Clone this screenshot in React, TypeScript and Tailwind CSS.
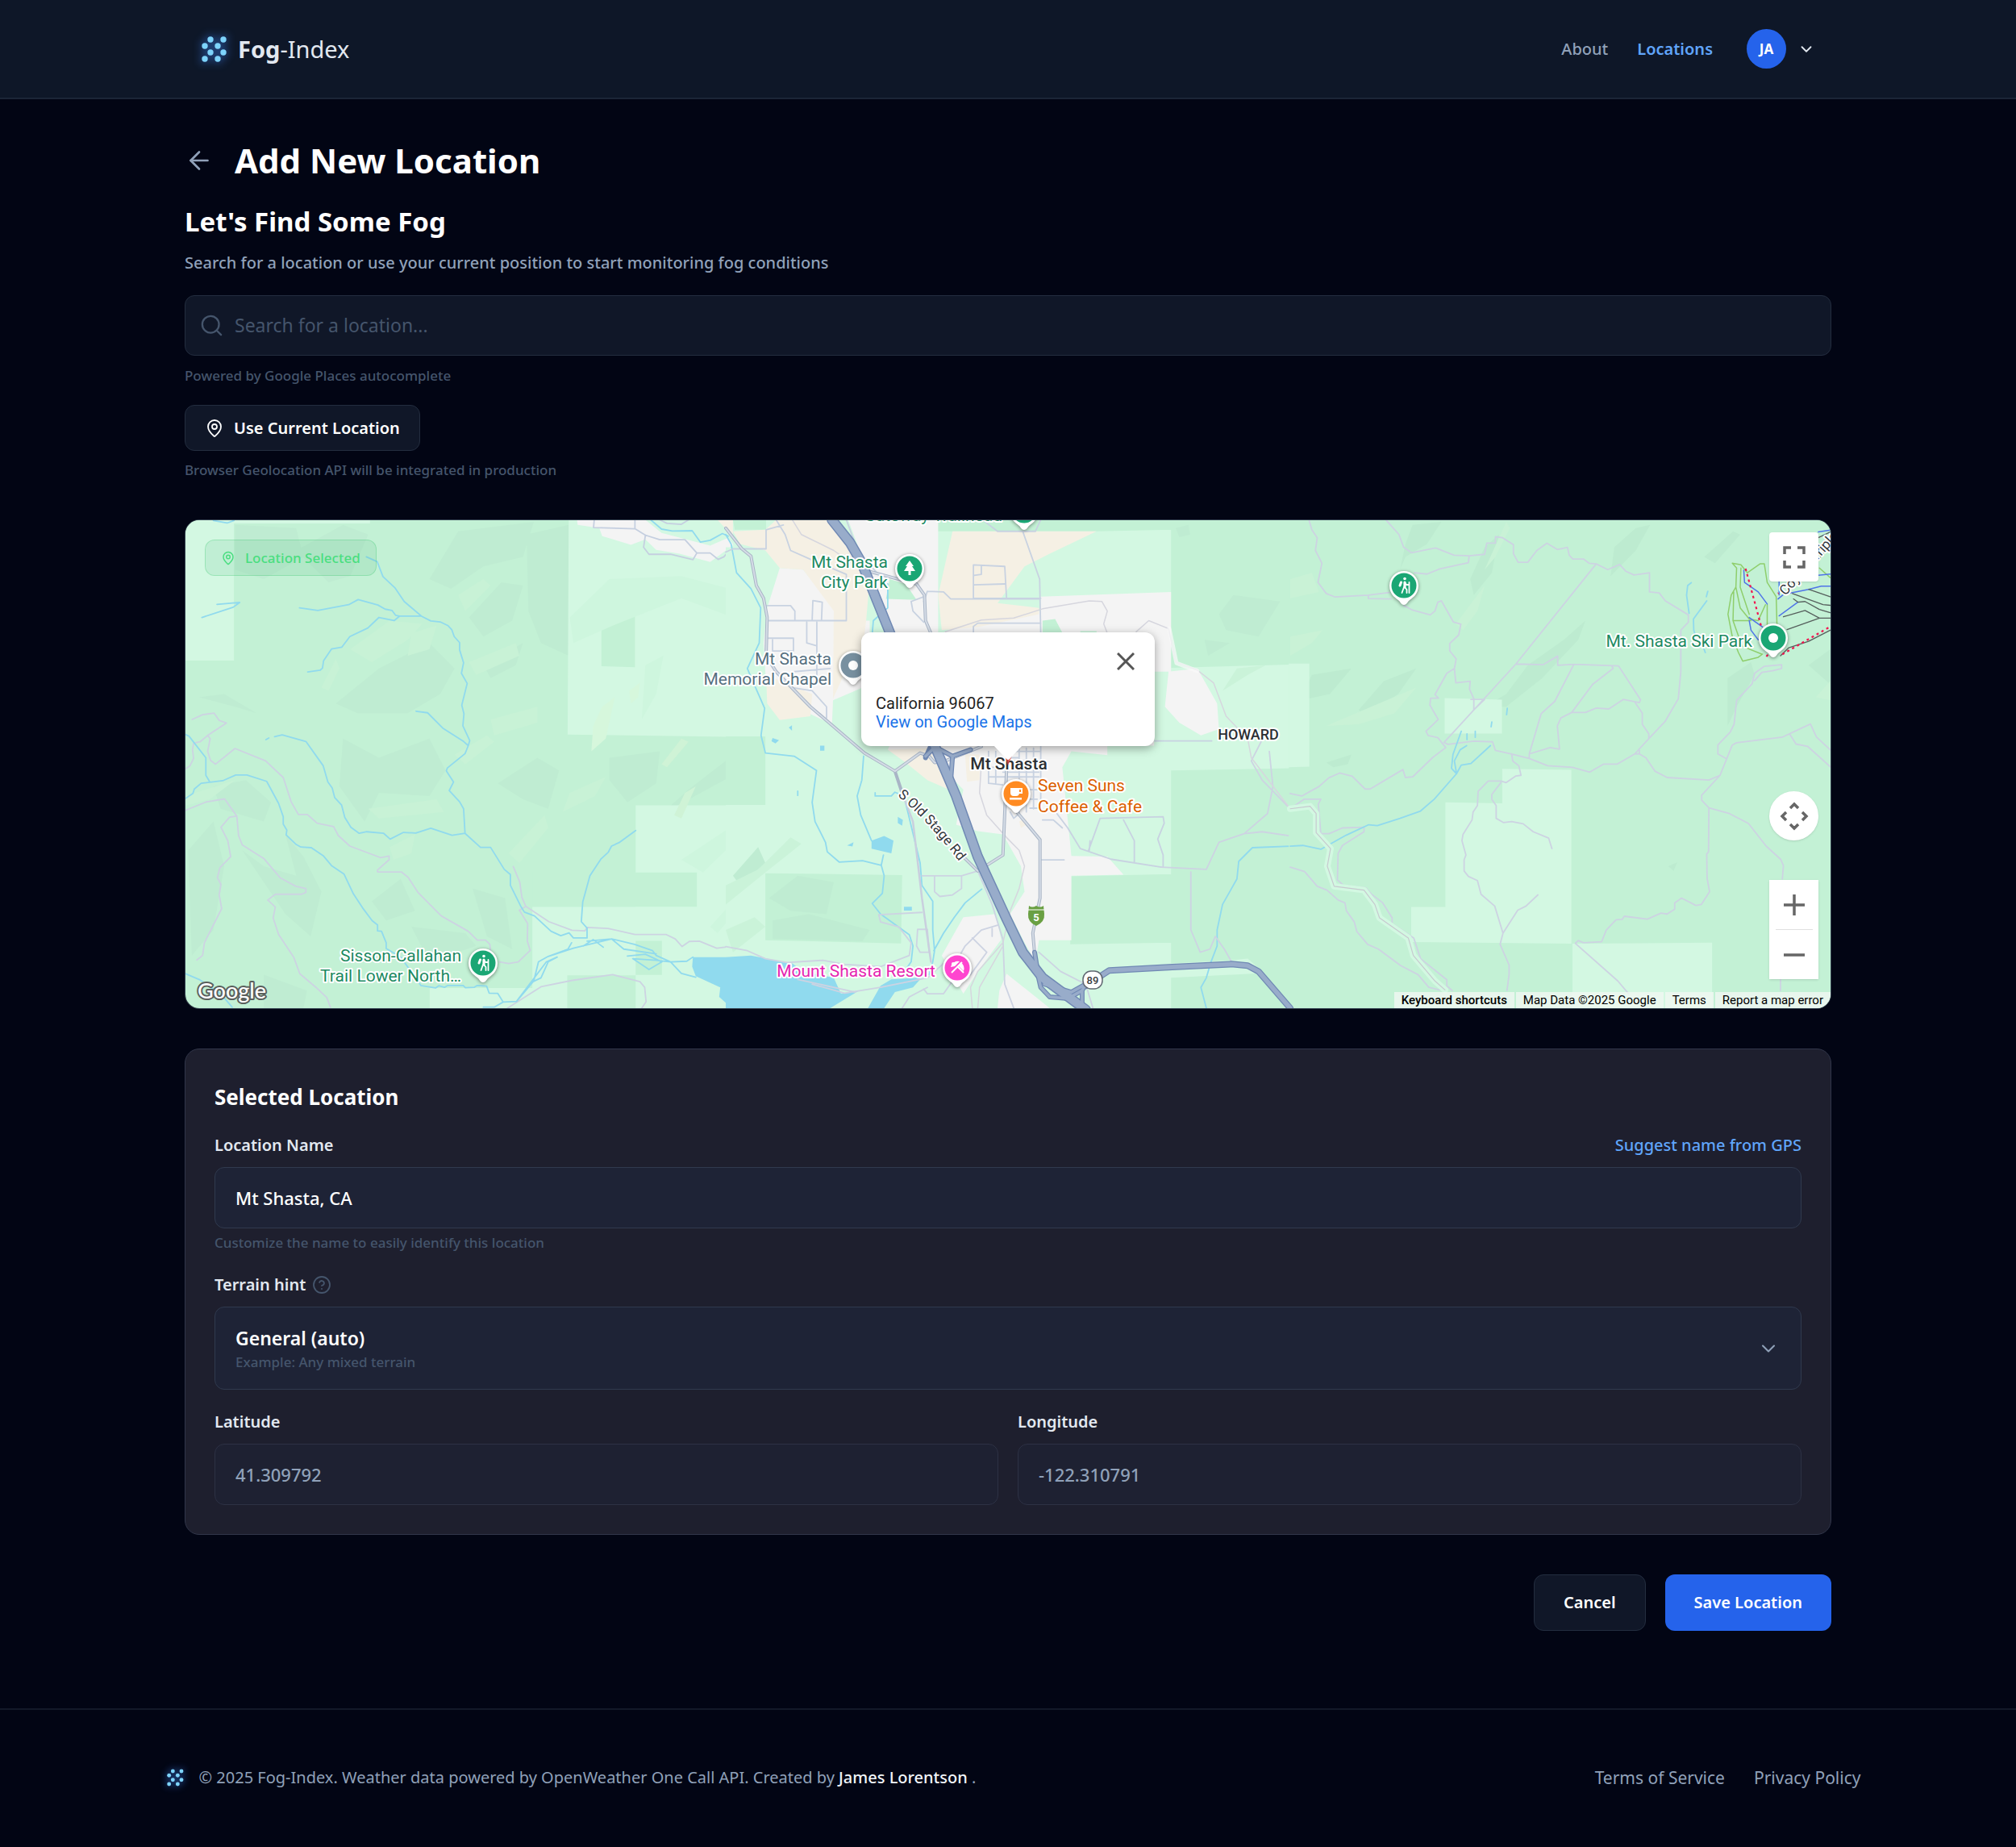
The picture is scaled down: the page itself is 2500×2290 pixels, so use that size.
import { useState } from 'react';
import type { ReactNode } from 'react';
import { ArrowLeft, ChevronDown, CircleHelp, MapPin, Search } from 'lucide-react';

const LogoDots = ({ className }: { className: string }) => (
  <svg viewBox="0 0 32 36" className={className} aria-hidden="true">
    {[
      [12, 6], [28, 6], [5, 14], [21, 14], [12, 22], [28, 22], [5, 30], [21, 30],
    ].map(([x, y]) => (
      <circle key={`${x}-${y}`} cx={x} cy={y} r="3.7" fill="#7dd3fc" />
    ))}
  </svg>
);

interface PinProps {
  x: number;
  y: number;
  color: string;
  children?: ReactNode;
}

const Pin = ({ x, y, color, children }: PinProps) => (
  <g transform={`translate(${x} ${y})`}>
    <path
      d="M0 24C-3 24-4 21-6 19-9 16-18 12-18 0A18 18 0 0 1 18 0C18 12 9 16 6 19 4 21 3 24 0 24Z"
      fill="#fff"
      style={{ filter: 'drop-shadow(0 1px 2px rgb(0 0 0 / .45))' }}
    />
    <circle r="15.5" fill={color} />
    {children}
  </g>
);

const Hiker = () => (
  <g stroke="#fff" strokeWidth="1.8" fill="none" strokeLinecap="round" strokeLinejoin="round">
    <circle cx="1" cy="-8.500" r="1.8" fill="#fff" stroke="none" />
    <path d="M1-4V2" strokeWidth="3.200" />
    <path d="M0 2L-2.500 9M1 2L3.500 5V9M1-4L3-1H6.500M6.500-4V9" />
    <path d="M-3.500-4L-5 0" strokeWidth="3" />
  </g>
);

// Each tile is drawn on its own 1568 x 1568 grid and scaled down to the map.
const TILE_SCALE = 'scale(.4464 .3954)';

const Tile = ({ x, children }: { x: number; children: ReactNode }) => (
  <g
    transform={`translate(${x} -6) ${TILE_SCALE}`}
    fill="none"
    strokeLinejoin="round"
    strokeLinecap="round"
    className="[&_path]:[vector-effect:non-scaling-stroke]"
  >
    {children}
  </g>
);

const LIGHT = '#d3f8e2';
const PARK = '#c3f1d5';
const TOWN = '#f4f4f4';
const SAND = '#f5f0e4';
const WATER = '#90daee';
const ROAD = '#cdd3e2';

const WestTile = () => (
  <Tile x={-9}>
    <path fill="#bfecd2" d="M160 30L330 40 350 130 240 200 160 170ZM330 110L460 30 530 60 480 190 420 210ZM440 590L560 480 700 400 770 480 730 560 640 620 500 620ZM460 700L560 760 700 700 745 800 700 880 560 870 520 960 450 850ZM780 50L990 20 960 130 850 160 760 230 700 200ZM970 60L1087 30V440L1010 400 975 300ZM810 320L900 210 960 220 930 330 850 380ZM850 470L960 400 940 470 870 510ZM100 850L190 830 260 900 240 960 120 920ZM30 1050L100 960 130 1100 100 1300 40 1380ZM180 1050L240 1100 330 1130 300 1000 350 1070 400 1180 370 1320 300 1250ZM540 1210L620 1140 660 1240 580 1270ZM650 1290L800 1310 830 1350 700 1400ZM820 1170L910 1200 930 1360 860 1320ZM1200 760L1340 740 1330 840 1250 900 1200 830ZM890 840L1000 760 1060 800 1030 920 960 890ZM1010 1130L1200 1125 1180 1200 1020 1220ZM60 570L160 600 220 620 130 560ZM1340 940L1568 800V730L1420 860ZM240 1440L360 1490 350 1545H240Z" />
    <path fill="#c8f2d6" d="M480 420L590 330 680 340 640 390 540 460 510 440ZM650 370L720 345 700 420 640 440ZM810 460L940 400 950 440 830 500ZM770 750L860 690 880 710 800 780ZM870 640L1000 600 1000 650 880 690ZM590 1040L660 1000 650 1060 600 1080ZM920 1060L1020 940 1030 980 950 1090ZM400 540L440 450 450 480 420 550ZM1090 870L1190 820 1160 880 1070 930ZM22 880L160 830 90 890 22 910ZM780 250L850 200 870 220 800 300ZM530 920L720 890 740 930 560 950Z" />
    <path fill={LIGHT} d="M22 14H535V25H157V455H22ZM1087 14H1568V695L1084 687ZM1273 909H1568V1568H701V1482H986V1227H1273Z" />
    <path fill={PARK} d="M1178 258L1271 260V476L1178 473ZM986 1120H1443V1227H986ZM1273 1334H1346V1441H1273ZM1083 1442H1273V1568H1083Z" />
    <path fill="#cef6de" d="M1090 320L1200 200 1400 190 1568 240V330L1400 260 1200 350 1100 400ZM1300 470L1350 440 1330 560 1290 640ZM1400 1080L1560 960V1010L1460 1120ZM1480 1290L1568 1180V1220L1500 1310Z" />
    <path fill="#d6f7dc" d="M1180 600L1215 570 1190 700 1150 740 1155 660ZM1255 550L1285 525 1280 570 1260 590Z" />
    <path fill="#cff3d6" d="M1380 940L1410 870 1440 850 1400 950ZM1345 780L1400 700 1420 710 1360 790Z" />
    <path fill={TOWN} d="M1110 14H1300L1345 55 1480 95 1530 70 1545 92 1480 146 1395 120 1330 108 1300 75 1260 92 1180 65 1172 40 1112 30Z" />
    <path fill={SAND} d="M1500 14H1568V90L1530 50Z" />
    <path fill={WATER} d="M1432 1385H1568V1545H1540L1505 1510 1508 1480 1440 1445 1430 1415Z" />
    <path
      stroke={ROAD}
      strokeWidth="1.8"
      d="M41 640L70 625 102 620 116 643 136 651 84 690 91 700 84 740 92 768 106 780 160 731 245 770 294 822 316 898 336 938H361L388 965 434 976 447 1004 479 1037 564 1073 588 1068V1080L556 1112V1118H622L641 1135 668 1182 733 1256 808 1304 833 1332H856L868 1345 870 1370M84 690L63 710 45 714 42 735 45 762 35 785 22 795M22 925L79 899 131 889 165 943 170 1004 180 1033 241 1077 286 1137 329 1163 357 1170V1182L345 1188H272L251 1206 272 1228 266 1262 281 1314 323 1385 340 1437 385 1480 415 1512 425 1542M165 943L145 946 121 978 140 1020 148 1070 118 1105 111 1136 121 1157 116 1190 123 1233 75 1340 70 1380 54 1394M933 1101L951 1150 957 1198 968 1226 1032 1274 1096 1301 1132 1303 1138 1292 1196 1295 1271 1314H1357L1383 1328 1402 1352 1422 1336 1450 1335 1498 1357 1530 1353M968 1226L950 1238 973 1280 972 1335 980 1364 947 1400 920 1405 895 1400M917 1545L1010 1478 1097 1458 1209 1440 1285 1462 1298 1480 1302 1525 1290 1545"
    />
    <path stroke="#c5cfe0" strokeWidth="1.8" d="M1158 14L1156 38 1271 42V14M1271 42L1300 62 1340 76H1410L1443 118H1480L1502 138 1518 130 1535 108M1300 62L1295 100 1310 122H1370L1432 139 1443 118M1340 14L1360 25 1400 28 1420 14" />
    <path
      stroke={WATER}
      strokeWidth="1.8"
      d="M525 130L555 145 571 192 605 228 630 270 678 316 704 331 730 334 752 346 762 358 769 380 784 399V422L795 462 789 495 805 527 790 595 796 622 793 660 812 706 808 722 799 747 750 792 747 801 767 836 755 863 784 898 795 920 799 997 842 1041H870L908 1110 925 1126V1160L955 1228 964 1244 992 1256 1038 1304 1065 1318 1088 1309 1100 1325H1138V1294L1122 1274 1126 1212 1146 1130 1177 1077 1197 1056 1206 1037 1227 1026 1273 988M339 290L390 298 476 280 502 264 557 281 577 294 596 298 606 313 617 316H678M617 316L602 330 560 320 529 353 479 380 457 413 428 419 406 456 403 479 397 485 362 491M663 614L695 619 737 667 795 709 808 722M270 694L291 688 357 709 405 785 418 836 430 855 437 885 456 908 465 947 482 978 505 997 526 992 573 997 591 1015 628 994 662 996 704 981 763 1003 799 997M22 687L32 692 79 760V815L89 834M22 888L43 872 47 858 66 840 126 832 162 814H193L248 834 281 903 294 945V968L304 987 302 1002 330 1032 343 1040 372 1042 405 1067 428 1098 463 1125 489 1187 514 1230 541 1271 556 1284V1303L567 1304 580 1340V1358L620 1385 662 1450 676 1474 717 1482 726 1475 742 1480 751 1474H794L800 1481 824 1480 833 1474 859 1476 866 1498 890 1499 905 1526 942 1524 990 1460 1003 1400 1030 1383 1100 1357 1206 1328 1270 1345 1320 1365 1330 1380 1370 1400 1415 1398 1432 1385M110 279L173 273 155 288 68 320M246 703L254 698M905 1526L880 1542H850M22 1437L60 1455 120 1500 152 1542M100 16L138 24 157 16M942 1524L1025 1400 1055 1385 1030 1400 1010 1450 988 1462M1030 1383L1085 1360 1095 1340M1138 1335L1206 1328 1240 1360 1330 1375M1250 1382L1300 1376 1346 1400 1310 1424 1265 1390 1330 1395 1370 1400 1400 1436 1440 1448M1128 1350L1155 1330 1183 1354M1315 14L1345 43 1375 49 1430 48 1453 84 1480 78 1514 57 1530 65"
    />
  </Tile>
);

const CenterTile = () => (
  <Tile x={671}>
    <path fill={LIGHT} d="M20 14H1568V1545H20Z" />
    <path fill={LIGHT} d="M0 100H40V693H0ZM0 908H40V1400H0Z" />
    <path fill={PARK} d="M0 693H110V908H0ZM110 1122L490 1128 487 1342 110 1332ZM490 14H1237V45L1030 50H490ZM1237 14H1568V468L1237 478ZM1237 800L1568 793V1545H1440L1500 1440 1450 1390 1405 1395 1237 1405ZM960 1132L1237 1125V1340L957 1345ZM1237 1450L1480 1436 1568 1560V1568H1237ZM20 14H112V45H25Z" />
    <path fill="#bfecd2" d="M1370 310L1410 250 1540 270 1480 380 1390 360ZM1330 390L1400 400 1340 440ZM1250 40L1285 30 1290 60 1260 68ZM120 1200L200 1130 300 1150 280 1250 180 1240ZM130 1270L230 1250 400 1300 380 1335 130 1328ZM20 1130L90 1040 110 1090 40 1160Z" />
    <path fill="#caf3d9" d="M0 1160L90 1110 180 1010 210 1030 110 1120 0 1220ZM0 1300L80 1260 110 1290 20 1370ZM1420 480L1500 470 1450 500 1380 550Z" />
    <path fill={TOWN} d="M150 165L215 170 300 290 335 210V330H400V470L380 540 298 580 295 655 230 620 112 530 105 400 115 290ZM340 14H590V370H450L395 180ZM600 370L680 325 875 300V255L1237 240V490H1190V722H1060V752L960 740 935 790 955 1010 960 1068 1060 1070 1105 1127 960 1130V1332H870L860 1400 830 1340 790 1250 830 1180 820 1100 770 1000 700 990 640 970 660 860 600 790 450 735ZM1230 490L1310 480 1365 590 1370 670 1320 690 1260 650 1220 600ZM660 1260L750 1250 765 1330 700 1430 660 1500 600 1380ZM780 1437L900 1545H755L760 1490Z" />
    <path fill={SAND} d="M20 50L110 45 140 14H285L400 200 390 330 380 420 340 470 298 575 300 300 215 170 150 165 110 110 40 90ZM590 250L630 50H1030L900 120 830 160 755 275 870 290V310L700 350 600 360ZM112 500L240 560 235 630 150 642 115 590ZM450 735L565 730 620 860 560 830 500 775ZM665 750H705V830L670 835ZM815 960L835 950V970L820 980Z" />
    <path fill={PARK} d="M455 200L500 215 530 265 445 262ZM880 330L915 325 935 368H880ZM985 363H1030V370H985Z" />
    <path fill={WATER} d="M0 1385L70 1380 185 1405 215 1430 300 1450 320 1500 370 1490 290 1545H0ZM430 1475L460 1455 530 1450 560 1430 520 1480 470 1495 440 1545H395ZM405 1020L440 1005 466 1020 460 1060 405 1045ZM495 1227H517V1239H495ZM130 698L148 705 138 715 127 708ZM262 722H274V738H262ZM478 945L492 955 490 973 478 965ZM337 1035L355 1025 352 1038ZM175 665L184 658V675Z" />
    <path
      stroke={WATER}
      strokeWidth="1.8"
      d="M0 60L15 90 30 180 70 230 97 290 93 400 60 480 75 520 108 605 98 690 110 745 190 755 252 800 240 900 248 960 277 1025 282 1055 315 1087 380 1083 432 1097 438 1065M432 1097L440 1130 435 1185 407 1217 430 1250 510 1315 520 1350 515 1400 490 1440M383 755L378 830 365 880 375 940 405 1020M415 870V880H460L470 868 495 880 510 950 540 1090 545 1160 575 1210V1300L580 1365 575 1400 565 1440M711 1172L665 1215 635 1260 605 1310 578 1365M450 215V290L410 330 407 370M1568 1037L1463 1042 1425 1085 1420 1140 1380 1220 1365 1300V1350L1348 1400 1335 1450 1320 1480 1335 1545M200 865V878"
    />
    <path
      stroke="#c8d2e1"
      strokeWidth="1.8"
      d="M0 115L20 105H112V45L160 30M140 14L165 60 180 110 240 140 335 185V330H118M113 283H180L192 300V328M240 328L242 267 268 272 266 328M253 335V520M225 335V400L250 408M115 385H188V425H130V390M190 490L290 480M185 540L240 550 280 600V635M825 50L872 200 875 370M688 155L775 160 780 260 M688 155V260H875M688 218L775 215M710 158V185L690 188M625 262H870M560 238L605 240 625 262M560 238L550 270M515 270L550 255M515 270L520 300 550 335M688 370V348L700 338H875M728 790H770M730 740V840L770 845M770 740H875M750 740V840M815 730V930M835 730V930M855 730V920M875 725V900M770 770H870M770 805H870M730 820H870M800 860H870M800 890H865M845 918H865M790 930L800 950 815 935M880 955H910L935 980M873 1080H940M780 730V760H815V730M920 935L950 980 985 1045 1070 1078 1210 1103M1192 707H1350M1008 1050L1040 950 1215 945 1218 965 1200 1015 1215 1065V1103M1105 955L1135 1020V1088M1010 1050L1012 1020M335 14L360 90 380 130 420 180M720 20L755 50H860L875 14"
    />
    <path
      stroke={ROAD}
      strokeWidth="1.8"
      d="M1210 1103L1335 1110 1370 1025 1440 998 1490 992 1568 1005M1292 1118V1300L1318 1370 1345 1360 1360 1320 1385 1360 1405 1400M1487 710L1460 770 1490 830 1568 920M1510 740L1520 850 1505 935 1440 998M545 1130L655 1130 700 1115M580 1130V1180L595 1195 630 1190 655 1170V1130M545 1245L425 1252 430 1275 480 1290 515 1340 510 1380 430 1415 330 1408 270 1395 170 1402 110 1390 60 1365 0 1352M533 1298H560L565 1370H540L530 1350ZM640 1400L665 1350 710 1300 755 1285M685 1325L725 1370 680 1440 630 1460 605 1500H560L550 1485M560 1480L510 1510 490 1545M700 1115L740 1220 770 1330 775 1470 800 1545M740 1295V1320M870 1370L930 1430 1000 1470 1020 1545M240 1470L330 1498 430 1480 560 1450 610 1400M360 1495L200 1455"
    />
    <path stroke="#d6d6de" strokeWidth="1.5" d="M710 780L705 870 725 940 780 1010 815 1050 830 1100 815 1170 790 1240 770 1340 700 1430 680 1480 685 1545M700 1545L705 1480 770 1350M610 365L710 328 800 322 880 293 1010 268 1045 270 1060 300 1050 340 1060 370M1140 365L1175 330 1230 355 1250 460 1310 485 1355 525 1390 630 1450 700 1460 760 1568 920M185 14L210 60 300 110 350 150" />
    <path stroke="#fafafa" strokeWidth="5" d="M1232 355L1252 463 1310 488" opacity=".7" />
    <g stroke="#a9b5c6" strokeWidth="4">
      <path d="M0 40L45 105 70 128 85 220 105 260 115 320 112 440 140 490 235 600 385 745 470 802 540 745 565 755 580 775 610 770 710 725M470 802L490 870M655 1065L700 1115 770 1065 780 800M805 925L873 1017V1200L853 1310 860 1400M380 170L480 200 530 215 552 250 555 330 570 370" />
    </g>
    <path stroke="#d5dce6" strokeWidth="2" d="M0 40L45 105 70 128 85 220 105 260 115 320 112 440 140 490 235 600 385 745 470 802 540 745 565 755 580 775 610 770 710 725M655 1065L700 1115 770 1065 780 800M805 925L873 1017V1200L853 1310 860 1400M380 170L480 200 530 215 552 250 555 330 570 370" />
    <path stroke="#c9cfde" strokeWidth="2.500" d="M490 870L520 960 545 1200 570 1400" />
    <g stroke="#7089b4" strokeWidth="6">
      <path d="M555 755L585 722M575 722L630 755 625 830M570 722L555 760M630 755L680 735M858 1370L865 1420 885 1460 1000 1545M865 1430L875 1480 900 1510 950 1515 990 1490 1000 1470M885 1470L960 1495 1000 1470M990 1490V1545" />
      <path strokeWidth="8" d="M1568 1545L1480 1430 1450 1412 1405 1407 1240 1416 1065 1427 1000 1475" />
      <path strokeWidth="13" d="M295 14L345 85 378 150 455 365 585 735 640 880 700 1070 780 1265 825 1370 880 1450 1000 1550" />
    </g>
    <g stroke="#98acca" strokeWidth="3.500">
      <path d="M555 755L585 722M575 722L630 755 625 830M630 755L680 735M858 1370L865 1420 885 1460 1000 1545M865 1430L875 1480 900 1510 950 1515 990 1490 1000 1470M885 1470L960 1495 1000 1470M990 1490V1545" />
      <path strokeWidth="5.500" d="M1568 1545L1480 1430 1450 1412 1405 1407 1240 1416 1065 1427 1000 1475" />
      <path strokeWidth="10" d="M295 14L345 85 378 150 455 365 585 735 640 880 700 1070 780 1265 825 1370 880 1450 1000 1550" />
    </g>
  </Tile>
);

const EastTile = () => (
  <Tile x={1371}>
    <path fill={PARK} d="M-4 14H1568V1568H20L-4 1500Z" />
    <path fill="#bdebd0" d="M340 30L420 20 380 90 320 130 305 170 320 90ZM540 100L580 60 560 180 510 250 500 200ZM900 100L960 40 1000 30 960 110 890 190ZM30 580L60 500 170 480 110 560ZM190 610L260 520 350 480 300 560 210 630ZM600 560L660 470 760 390 820 330 800 390 700 510 600 600 540 600ZM1215 510L1280 460 1290 500 1240 600 1215 660ZM1440 470L1500 420V530ZM100 775L170 750 160 780 120 790ZM1050 1100L1075 1088 1065 1115ZM1150 130L1230 50 1250 60 1180 150Z" />
    <path fill="#c9f2d6" d="M100 660L350 540 290 620 190 655ZM460 340L540 220 520 300 480 360ZM0 380L90 360 60 400 0 440ZM0 200L60 180 80 240 0 260ZM540 170L600 20 610 40 570 130ZM1460 570L1500 520V580Z" />
    <path fill={LIGHT} d="M-4 465H53V788L-4 790ZM429 573L588 578V684H429ZM589 795L781 798V1343L336 1338V1228H431V900L589 903ZM784 1343L1172 1340V1545H784Z" />
    <path
      stroke={ROAD}
      strokeWidth="1.8"
      d="M52 14L60 45 75 70 70 110 88 150 77 210 100 245 125 256 217 250 275 242M217 250V261L280 262M266 14L302 60 315 100 337 117 404 102 455 125 497 127 540 122 546 87H570V67L590 70 620 92V120L633 147H660L685 110 713 87 742 107 770 100 775 125 785 137H815L830 150 850 152 882 170 915 154 932 175 955 187 998 180V240L1025 243 1042 268 1106 312V335L1085 360V490L1078 575 1042 645 996 700 957 748 908 780H870L832 805 784 790 715 785 664 762 615 748 570 737 562 710 510 708 438 718 427 712M497 127L495 148 415 168 380 184 345 180M316 283L340 297 389 312 402 300 410 272 420 268 453 334 474 341 468 375 443 402V425L461 450 456 480 460 525 500 520 498 545 510 575V610L540 577H502M456 480L435 495 402 562 412 573H390L388 595 411 640 377 677 383 690 410 697 432 728M850 152L627 466 427 712M627 466L703 468 743 441V470L788 467 912 472 973 578 970 587 925 577 885 607 850 604 820 618H782L752 635 742 660 748 733 722 728 664 748V762M788 467L735 583 697 622 664 748M782 618L840 530 897 480 893 472M958 587L978 620V655L996 685V700M970 737V748H957M970 748L988 760 1013 802 1047 822 1163 830 1194 815 1228 720 1240 713 1368 695 1445 654 1462 695 1500 735M1387 685L1405 717 1437 724 1500 788M1194 815L1143 877V893L1163 917 1220 935 1273 966 1322 1037 1362 1078 1370 1098 1367 1140M1163 917L1162 1055 1157 1062 1158 1138 1165 1180 1142 1220 1127 1223 1087 1200 1068 1215V1235L1047 1250 1030 1247 992 1266 928 1257 922 1267 905 1268 878 1300 865 1337 815 1340 800 1333 792 1342 910 1460 940 1500M1212 763L1188 748V720L1222 680 1233 655 1240 580 1283 528 1290 495 1317 473 1365 468V480L1340 487 1310 492 1290 518M432 728L395 760 340 820 320 822 313 797 222 858H208L172 818 137 808 107 823 80 850 32 880 0 872M0 920L38 890H85L78 905 85 998H108L145 980 205 978V992L145 1035 133 1060 131 1143 148 1160 210 1168 225 1187 257 1215 283 1262V1280L343 1325 362 1390 435 1456V1475L450 1490M0 1103L40 1117 75 1163 102 1175 133 1206 152 1215 156 1240 178 1275 185 1305 215 1345 245 1360 307 1412 355 1440 385 1480 415 1488M615 748L618 770 635 785 641 815 627 817 600 838 585 833H550L522 865 520 910 508 930 505 955 480 1000 477 1020 488 1065 483 1080V1115L495 1132 520 1145 530 1188 568 1225 591 1310 583 1345 608 1410V1440L602 1490M585 838L560 875V890L572 910V950L592 963 615 960 647 967 675 992 718 1012 727 1045M591 1310L632 1238 655 1225 688 1190M1362 1453V1490"
    />
    <path stroke={WATER} strokeWidth="1.8" d="M475 677L452 750 448 793 462 810 475 783 502 778 556 722M490 722L472 735 456 770 462 810 400 890 362 927 305 950 242 973 218 970 155 1003 85 1047 35 1035 0 1037M491 685V703M514 677V696M560 648L558 663M603 605L601 625M1114 211L1104 220 1101 250 1108 307M1160 238L1156 255M1157 268L1120 325 1121 360 1126 380M1145 405L1153 430" />
    <path stroke="#d3f8e2" strokeWidth="8" d="M0 920L55 912 72 935V995L112 1045 103 1100 122 1163 205 1175 235 1220 248 1262 328 1325 342 1380 402 1460 430 1488" />
    <path stroke="#c7c9cf" strokeWidth="1.2" d="M0 920L55 912 72 935V995L112 1045 103 1100 122 1163 205 1175 235 1220 248 1262 328 1325 342 1380 402 1460 430 1488" />
    {/* ski runs */}
    <path stroke="#8fce6c" strokeWidth="1.5" d="M1240 165L1228 150 1252 155 1270 180 1305 152H1317L1325 210 1350 255 1352 340M1240 165L1238 225 1225 250 1216 310 1228 380 1245 430 1257 457 1300 445 1312 435M1238 225L1250 290 1275 325 1300 330 1320 280M1252 165L1250 225 1275 310M1232 240L1230 330 1280 330M1230 330L1255 410 1310 435M1325 280V345M1470 165L1500 195" />
    <path stroke="#4f74e8" strokeWidth="1.5" d="M1260 172L1262 210 1300 240 1325 278M1275 320L1312 350M1275 330L1280 360 1300 390M1355 262L1370 248 1440 232 1475 222H1500M1358 315L1410 272M1467 52L1500 46M1467 188L1500 184M1358 205V250" />
    <path stroke="#555e5c" strokeWidth="1.3" d="M1395 245L1480 280 1500 282M1440 232L1500 255M1398 262L1410 272 1430 270 1470 295 1500 305M1370 318L1430 298 1470 322H1500M1470 322L1380 358M1362 440L1385 415 1440 395 1500 360M1467 140L1500 90M1467 70L1500 52" />
    <path stroke="#f1154f" strokeWidth="2.200" strokeDasharray="3 4" strokeLinecap="butt" d="M1265 167L1310 355M1495 352L1360 440M1327 437L1317 450M1380 220L1355 245" />
  </Tile>
);

const MapCanvas = () => (
  <svg
    viewBox="0 0 2042 605"
    preserveAspectRatio="xMidYMid slice"
    className="absolute inset-0 h-full w-full bg-[#c3f1d5] font-[Roboto,sans-serif]"
    role="img"
    aria-label="Map of Mt Shasta, California"
  >
    <WestTile />
    <CenterTile />
    <EastTile />

    <Pin x={1041} y={-12} color="#1aa674" />
    <Pin x={899} y={60} color="#1aa674">
      <path d="M0-10L5-3H3L7 3H1.500V8H-1.500V3H-7L-3-3H-5Z" fill="#fff" />
    </Pin>
    <Pin x={829} y={180} color="#7890a0">
      <circle r="6" fill="#fff" />
    </Pin>
    <Pin x={1031} y={339} color="#ff8b22">
      <path d="M-7-7H4V-1A4 4 0 0 1 0 3H-3A4 4 0 0 1-7-1ZM-8 5H7V7.500H-8Z" fill="#fff" />
      <path d="M4-6H7V-1H4" stroke="#fff" strokeWidth="2" fill="none" />
    </Pin>
    <Pin x={958} y={555} color="#ff45cf">
      <path d="M-8-1A9 9 0 0 1 3-8L-3-2ZM4-7A9 9 0 0 1 8 4L2-2Z" fill="#fff" />
      <path d="M6-7L-7 6M0-2L8 6" stroke="#fff" strokeWidth="2" />
      <circle cx="-5" cy="-5" r="2" fill="#fff" />
    </Pin>
    <Pin x={370} y={549} color="#1aa674"><Hiker /></Pin>
    <Pin x={1512} y={81} color="#1aa674"><Hiker /></Pin>
    <Pin x={1970} y={146} color="#1aa674">
      <circle r="6" fill="#fff" />
    </Pin>

    <g stroke="#fff" strokeWidth="4" strokeLinejoin="round" style={{ paintOrder: 'stroke' }} fontSize="21">
      <g textAnchor="end" fill="#1c8a62">
        <text x="1014" y="1">Gateway Trailhead</text>
        <text x="872" y="59">Mt Shasta</text>
        <text x="872" y="84">City Park</text>
        <text x="343" y="547">Sisson-Callahan</text>
        <text x="343" y="572">Trail Lower North…</text>
        <text x="1944" y="157">Mt. Shasta Ski Park</text>
      </g>
      <g textAnchor="end" fill="#56707f">
        <text x="802" y="179">Mt Shasta</text>
        <text x="802" y="204">Memorial Chapel</text>
      </g>
      <text x="931" y="566" textAnchor="end" fill="#e526b0">Mount Shasta Resort</text>
      <g fill="#db6000">
        <text x="1058" y="336">Seven Suns</text>
        <text x="1058" y="362">Coffee &amp; Cafe</text>
      </g>
      <g textAnchor="middle" fill="#2b2f33" fontWeight="500">
        <text x="1022" y="309">Mt Shasta</text>
        <text x="1319" y="272" fontSize="18">HOWARD</text>
      </g>
      <path d="M1017 292H1026L1021 304Z" fill="#d9443c" stroke="none" opacity=".8" />
      <path id="stage-rd" d="M884 342Q918 368 966 430" fill="none" stroke="none" />
      <text fill="#33373b" fontSize="17">
        <textPath href="#stage-rd">S Old Stage Rd</textPath>
      </text>
      <text transform="translate(1985 94) rotate(-48)" fill="#33373b" fontSize="17">Coyote Triple</text>
    </g>

    <path d="M1047 478Q1051 481 1056 478 1061 481 1065 478L1066 488Q1067 498 1056 503 1045 498 1046 488Z" fill="#6aa043" />
    <path d="M1046 483H1066" stroke="#fff" strokeWidth="1" />
    <text x="1056" y="497" fontSize="13" fontWeight="700" textAnchor="middle" fill="#fff">5</text>
    <rect x="1114" y="559" width="24" height="22" rx="10" fill="#fff" stroke="#5f6670" strokeWidth="1.500" />
    <text x="1126" y="575" fontSize="13" fontWeight="500" textAnchor="middle" fill="#3c4043">89</text>

    <text
      x="16" y="593" fontFamily="Lato, sans-serif" fontSize="27" fontWeight="500" fill="#fff"
      stroke="#5a5f5c" strokeWidth="4" strokeLinejoin="round" style={{ paintOrder: 'stroke' }}
    >
      Google
    </text>
  </svg>
);

const mapButton = 'flex items-center justify-center bg-white text-[#666]';

const LocationMap = () => (
  <section className="relative mt-[49px] h-[607px] overflow-hidden rounded-[18px] border border-[#33414f]">
    <MapCanvas />

    <div className="absolute left-6 top-6 flex h-[45px] items-center gap-3 rounded-xl border border-[#22c55e]/25 bg-[#22a055]/10 px-[19px] text-[17px] font-medium text-[#4ade80]">
      <MapPin className="size-[18px]" strokeWidth={2} />
      Location Selected
    </div>

    <div className="absolute left-1/2 top-[139px] h-[141px] w-[364px] -translate-x-1/2 rounded-xl bg-white px-[18px] pt-[77px] font-[Roboto,sans-serif] text-[20px] leading-[23px] text-[#222] shadow-[0_3px_12px_rgba(0,0,0,0.35)]">
      <p>California 96067</p>
      <a href="#maps" className="text-[#1a73e8]">View on Google Maps</a>
      <button type="button" aria-label="Close" className="absolute right-6 top-6 p-px">
        <svg viewBox="0 0 22 22" className="size-[22px]" stroke="#555" strokeWidth="3">
          <path d="M1 1L21 21M21 1L1 21" />
        </svg>
      </button>
      <svg viewBox="0 0 36 17" className="absolute left-1/2 top-full h-[17px] w-9 -translate-x-1/2" fill="#fff">
        <path d="M0-1H36L20 16Q18 18 16 16Z" />
      </svg>
    </div>

    <button type="button" aria-label="Toggle fullscreen view" className={`${mapButton} absolute right-[15px] top-[15px] size-[61px] rounded-sm shadow`}>
      <svg viewBox="0 0 28 28" className="size-7" fill="none" stroke="currentColor" strokeWidth="3.500">
        <path d="M2 10V2H10M18 2H26V10M26 18V26H18M10 26H2V18" />
      </svg>
    </button>
    <button type="button" aria-label="Map camera controls" className={`${mapButton} absolute bottom-[208px] right-[15px] size-[61px] rounded-full shadow`}>
      <svg viewBox="0 0 36 36" className="size-9" fill="none" stroke="currentColor" strokeWidth="3.500">
        <path d="M13 8L18 3 23 8M28 13L33 18 28 23M23 28L18 33 13 28M8 23L3 18 8 13" />
      </svg>
    </button>
    <div className="absolute bottom-9 right-[15px] flex w-[61px] flex-col items-center bg-white shadow">
      <button type="button" aria-label="Zoom in" className={`${mapButton} size-[61px]`}>
        <svg viewBox="0 0 26 26" className="size-[26px]" stroke="currentColor" strokeWidth="3.500">
          <path d="M13 0V26M0 13H26" />
        </svg>
      </button>
      <div className="h-px w-[46px] bg-[#e0e0e0]" />
      <button type="button" aria-label="Zoom out" className={`${mapButton} size-[61px]`}>
        <svg viewBox="0 0 26 26" className="size-[26px]" stroke="currentColor" strokeWidth="3.500">
          <path d="M0 13H26" />
        </svg>
      </button>
    </div>

    <div className="absolute bottom-0 right-0 flex gap-0.5 font-[Roboto,sans-serif] text-[15px] leading-5 text-black [&>*]:bg-[#f1f7f3]/80 [&>*]:px-[9px]">
      <button type="button" className="font-medium">Keyboard shortcuts</button>
      <span>Map Data ©2025 Google</span>
      <a href="#map-terms">Terms</a>
      <a href="#report">Report a map error</a>
    </div>
  </section>
);

const labelClass = 'block text-[20px] font-semibold leading-8 text-slate-200';
const hintClass = 'text-[17px] font-medium leading-6 text-slate-600';
const fieldClass = 'mt-[11px] block h-[76px] w-full rounded-xl border px-[25px] text-[22px] font-medium outline-none';
const readOnlyField = `${fieldClass} border-[#2d3144] bg-[#1e2132] text-slate-400`;

const LocationForm = () => {
  const [name, setName] = useState('Mt Shasta, CA');

  return (
    <section className="mt-[49px] rounded-[18px] border border-[#31364a] bg-[#1e1f2e] p-9">
      <h3 className="text-[26px] font-bold leading-[46px]">Selected Location</h3>

      <div className="mt-[21px] flex items-center justify-between">
        <label htmlFor="name" className={labelClass}>Location Name</label>
        <button type="button" className="text-[20px] font-medium leading-8 text-[#60a5fa]">Suggest name from GPS</button>
      </div>
      <input
        id="name"
        value={name}
        onChange={(e) => setName(e.target.value)}
        className={`${fieldClass} border-[#303a4e] bg-[#1e2336] text-white`}
      />
      <p className={`mt-1.5 ${hintClass}`}>Customize the name to easily identify this location</p>

      <div className="mt-6 flex items-center gap-2">
        <label htmlFor="terrain" className={labelClass}>Terrain hint</label>
        <CircleHelp className="size-6 text-slate-600" strokeWidth={1.8} />
      </div>
      <div className="relative mt-[11px] h-[103px] rounded-xl border border-[#303a4e] bg-[#1e2336] px-[25px] py-5">
        <select id="terrain" className="block w-full appearance-none bg-transparent text-[23px] font-semibold leading-9 text-white outline-none">
          <option>General (auto)</option>
        </select>
        <p className={hintClass}>Example: Any mixed terrain</p>
        <ChevronDown className="pointer-events-none absolute right-[26px] top-1/2 size-7 -translate-y-1/2 text-slate-400" strokeWidth={1.8} />
      </div>

      <div className="mt-6 grid grid-cols-2 gap-6">
        <div>
          <label htmlFor="lat" className={labelClass}>Latitude</label>
          <input id="lat" readOnly value="41.309792" className={readOnlyField} />
        </div>
        <div>
          <label htmlFor="lng" className={labelClass}>Longitude</label>
          <input id="lng" readOnly value="-122.310791" className={readOnlyField} />
        </div>
      </div>
    </section>
  );
};

const Header = () => (
  <header className="border-b-2 border-[#1b2537] bg-[#0e1728]">
    <div className="mx-auto flex h-[121px] max-w-[2042px] items-center justify-between pl-[18px] pr-5">
      <a href="#home" className="flex items-center gap-3 text-[29px] text-slate-200">
        <LogoDots className="h-9 w-9 drop-shadow-[0_0_6px_#3b82f6]" />
        <span><b className="font-bold">Fog</b>-Index</span>
      </a>
      <nav className="flex items-center text-[20px] font-medium">
        <a href="#about" className="text-slate-400">About</a>
        <a href="#locations" className="ml-9 font-semibold text-[#60a5fa]">Locations</a>
        <button type="button" aria-label="Account menu" className="ml-[42px] flex items-center gap-3.5">
          <span className="flex size-[49px] items-center justify-center rounded-full bg-[#2563eb] text-[17px] font-bold text-white">JA</span>
          <ChevronDown className="size-[22px] text-slate-200" />
        </button>
      </nav>
    </div>
  </header>
);

const Footer = () => (
  <footer className="mt-24 border-t-2 border-[#131929]">
    <div className="mx-auto flex max-w-[2115px] items-center justify-between py-[68px] text-[20px] leading-8 text-slate-400">
      <div className="flex items-center gap-[18px] pl-3">
        <LogoDots className="size-6 drop-shadow-[0_0_5px_#3b82f6]" />
        <p>
          © 2025 Fog-Index. Weather data powered by OpenWeather One Call API. Created by{' '}
          <a href="#author" className="font-medium text-slate-100">James Lorentson</a> .
        </p>
      </div>
      <div className="flex gap-9 text-[21px]">
        <a href="#terms">Terms of Service</a>
        <a href="#privacy">Privacy Policy</a>
      </div>
    </div>
  </footer>
);

export default function App() {
  return (
    <div className="min-h-screen bg-[#020514] font-['Noto_Sans',sans-serif] text-white">
      <Header />
      <main className="mx-auto max-w-[2042px] pt-12">
        <div className="flex items-center gap-[26px]">
          <button type="button" aria-label="Back" className="flex size-9 items-center justify-center">
            <ArrowLeft className="size-9 text-slate-400" strokeWidth={1.8} />
          </button>
          <h1 className="text-[42px] font-bold leading-[56px]">Add New Location</h1>
        </div>

        <h2 className="mt-7 text-[33px] font-bold leading-10">Let's Find Some Fog</h2>
        <p className="mt-[15px] text-[20px] font-medium leading-8 text-slate-400">
          Search for a location or use your current position to start monitoring fog conditions
        </p>

        <label className="mt-6 flex h-[75px] items-center gap-[13px] rounded-xl border border-[#232d3f] bg-[#101728] px-[17px]">
          <Search className="size-[31px] text-slate-600" strokeWidth={1.8} />
          <input
            type="text"
            aria-label="Search for a location"
            placeholder="Search for a location..."
            className="flex-1 bg-transparent text-[23px] outline-none placeholder:text-slate-600"
          />
        </label>
        <p className={`mt-[13px] ${hintClass}`}>Powered by Google Places autocomplete</p>

        <button type="button" className="mt-6 flex h-[57px] items-center gap-3 rounded-xl border border-[#232d3f] bg-[#101728] px-6 text-[20px] font-semibold">
          <MapPin className="size-6" strokeWidth={1.8} />
          Use Current Location
        </button>
        <p className={`mt-3 ${hintClass}`}>Browser Geolocation API will be integrated in production</p>

        <LocationMap />
        <LocationForm />

        <div className="mt-[49px] flex justify-end gap-6 text-[20px] font-semibold">
          <button type="button" className="h-[70px] rounded-xl border border-[#232d3f] bg-[#101728] px-9">Cancel</button>
          <button type="button" className="h-[70px] rounded-xl bg-[#2563eb] px-9">Save Location</button>
        </div>
      </main>
      <Footer />
    </div>
  );
}
